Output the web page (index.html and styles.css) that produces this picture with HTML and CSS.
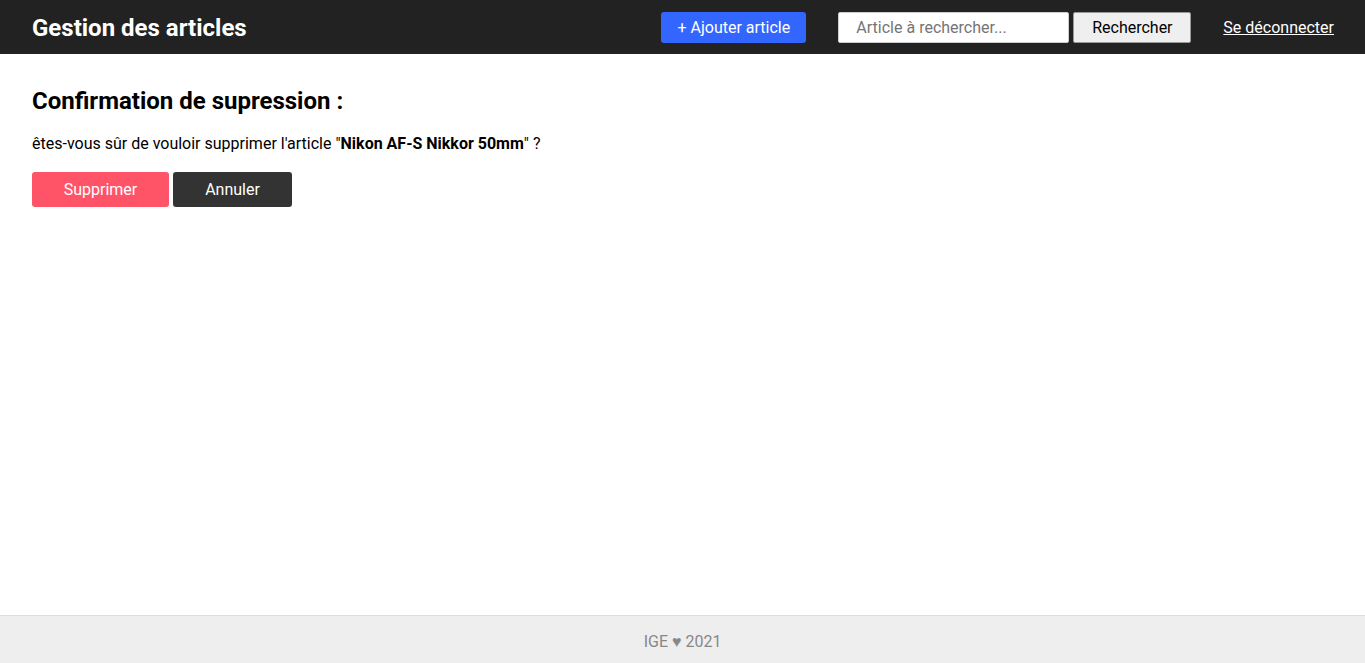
FILE: index.html
```html
<!DOCTYPE html>
<html lang="fr">
<head>
<meta charset="utf-8">
<title>Gestion des articles</title>
<link rel="stylesheet" href="styles.css">
</head>
<body>
<header class="topbar">
  <h1 class="brand">Gestion des articles</h1>
  <nav class="actions">
    <a class="btn-add" href="#">+ Ajouter article</a>
    <form class="search">
      <input class="search-input" type="text" placeholder="Article à rechercher...">
      <button class="search-btn" type="button">Rechercher</button>
    </form>
    <a class="logout" href="#">Se déconnecter</a>
  </nav>
</header>
<main class="content">
  <h2 class="title">Confirmation de supression :</h2>
  <p class="question">êtes-vous sûr de vouloir supprimer l'article "<strong>Nikon AF-S Nikkor 50mm</strong>" ?</p>
  <div class="buttons">
    <button class="btn btn-delete" type="button">Supprimer</button>
    <button class="btn btn-cancel" type="button">Annuler</button>
  </div>
</main>
<footer class="footer">IGE ♥ 2021</footer>
</body>
</html>
```

FILE: styles.css
```css
* { box-sizing: border-box; }
html, body { height: 100%; }
body {
  margin: 0;
  font-family: Roboto, "Liberation Sans", sans-serif;
  color: #000;
  background: #fff;
  display: flex;
  flex-direction: column;
}
.topbar {
  height: 54px;
  background: #222;
  display: flex;
  align-items: center;
  justify-content: space-between;
  padding: 0 31px 0 32px;
  flex-shrink: 0;
}
.brand {
  margin: 0;
  padding-top: 2px;
  color: #fff;
  font-size: 24px;
  font-weight: 700;
}
.actions {
  display: flex;
  align-items: center;
}
.btn-add {
  display: inline-flex;
  align-items: center;
  justify-content: center;
  height: 31px;
  width: 145px;
  background: #3366ff;
  color: #fff;
  border-radius: 3px;
  text-decoration: none;
  font-size: 16px;
  margin-right: 32px;
}
.search {
  display: flex;
  align-items: center;
  gap: 4px;
  margin: 0 32px 0 0;
}
.search-input {
  width: 231px;
  height: 31px;
  border: 1px solid #ccc;
  border-radius: 2px;
  padding: 0 17px;
  font-family: Roboto, "Liberation Sans", sans-serif;
  font-size: 16px;
  color: #333;
  outline: none;
}
.search-input::placeholder { color: #757575; }
.search-btn {
  width: 118px;
  height: 31px;
  background: #efefef;
  border: 1px solid #999;
  border-radius: 2px;
  font-family: Roboto, "Liberation Sans", sans-serif;
  font-size: 16px;
  color: #000;
}
.logout {
  color: #fff;
  font-size: 16px;
  text-decoration: underline;
}
.content {
  flex: 1;
  padding: 0 32px;
}
.title {
  margin: 33px 0 0;
  font-size: 24px;
  font-weight: 700;
  line-height: 28px;
}
.question {
  margin: 19px 0 0;
  font-size: 16px;
  line-height: 20px;
}
.buttons {
  display: flex;
  gap: 4px;
  margin-top: 18px;
}
.btn {
  height: 35px;
  border: none;
  border-radius: 3px;
  color: #fff;
  font-family: Roboto, "Liberation Sans", sans-serif;
  font-size: 16px;
}
.btn-delete { width: 137px; background: #ff5468; }
.btn-cancel { width: 119px; background: #333; }
.footer {
  height: 48px;
  flex-shrink: 0;
  background: #eee;
  border-top: 1px solid #ddd;
  display: flex;
  align-items: center;
  justify-content: center;
  padding-top: 3px;
  color: #888;
  font-size: 16px;
}
```
